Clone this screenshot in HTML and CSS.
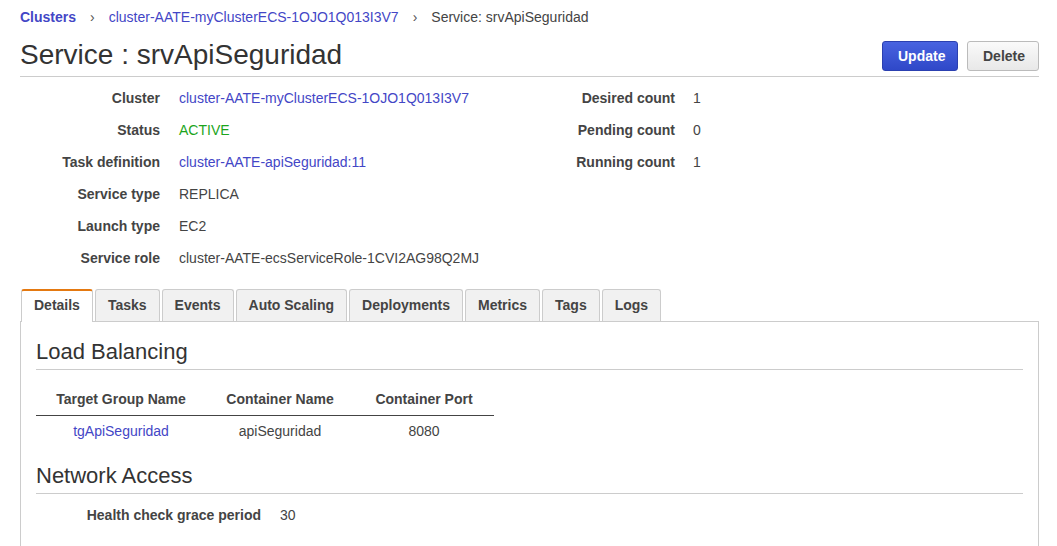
FILE: index.html
```html
<!DOCTYPE html>
<html>
<head>
<meta charset="utf-8">
<link rel="stylesheet" href="styles.css">
</head>
<body>
<div class="page">
  <nav class="crumbs">
    <a class="crumb-root" href="#">Clusters</a>
    <span class="sep">›</span>
    <a href="#">cluster-AATE-myClusterECS-1OJO1Q013I3V7</a>
    <span class="sep">›</span>
    <span class="current">Service: srvApiSeguridad</span>
  </nav>

  <header class="title-row">
    <h1 class="title">Service : srvApiSeguridad</h1>
    <div class="actions">
      <button class="btn btn-primary">Update</button>
      <button class="btn btn-default">Delete</button>
    </div>
  </header>

  <section class="summary">
    <dl class="kv kv-left">
      <dt>Cluster</dt><dd><a href="#">cluster-AATE-myClusterECS-1OJO1Q013I3V7</a></dd>
      <dt>Status</dt><dd class="active">ACTIVE</dd>
      <dt>Task definition</dt><dd><a href="#">cluster-AATE-apiSeguridad:11</a></dd>
      <dt>Service type</dt><dd>REPLICA</dd>
      <dt>Launch type</dt><dd>EC2</dd>
      <dt>Service role</dt><dd>cluster-AATE-ecsServiceRole-1CVI2AG98Q2MJ</dd>
    </dl>
    <dl class="kv kv-right">
      <dt>Desired count</dt><dd>1</dd>
      <dt>Pending count</dt><dd>0</dd>
      <dt>Running count</dt><dd>1</dd>
    </dl>
  </section>

  <ul class="tabs">
    <li class="tab tab-active">Details</li>
    <li class="tab">Tasks</li>
    <li class="tab">Events</li>
    <li class="tab">Auto Scaling</li>
    <li class="tab">Deployments</li>
    <li class="tab">Metrics</li>
    <li class="tab">Tags</li>
    <li class="tab">Logs</li>
  </ul>

  <div class="panel">
    <h2 class="section-title">Load Balancing</h2>
    <table class="lb-table">
      <thead>
        <tr><th class="c1">Target Group Name</th><th class="c2">Container Name</th><th class="c3">Container Port</th></tr>
      </thead>
      <tbody>
        <tr><td><a href="#">tgApiSeguridad</a></td><td>apiSeguridad</td><td>8080</td></tr>
      </tbody>
    </table>

    <h2 class="section-title section-gap">Network Access</h2>
    <dl class="kv kv-net">
      <dt>Health check grace period</dt><dd>30</dd>
    </dl>
  </div>
</div>
</body>
</html>
```

FILE: styles.css
```css
* { box-sizing: border-box; }

html, body {
  margin: 0;
  padding: 0;
  background: #fff;
}

body {
  font-family: "Liberation Sans", Arial, sans-serif;
  font-size: 14px;
  color: #444;
}

a {
  color: #4346c6;
  text-decoration: none;
}

.page {
  padding: 7px 18px 0 20px;
}

/* breadcrumbs */
.crumbs {
  display: flex;
  align-items: center;
  line-height: 20px;
  height: 20px;
}
.crumb-root { font-weight: bold; }
.sep {
  color: #555;
  margin: 0 14px;
  font-size: 14px;
}
.current { color: #444; }

/* title row */
.title-row {
  display: flex;
  justify-content: space-between;
  align-items: flex-end;
  margin-top: 11px;
  padding-bottom: 4px;
  border-bottom: 1px solid #ccc;
}
.title {
  margin: 0;
  font-size: 28px;
  font-weight: normal;
  line-height: 34px;
  color: #333;
}
.actions {
  display: flex;
  gap: 9px;
  margin-bottom: 1px;
}
.btn {
  font-family: "Liberation Sans", Arial, sans-serif;
  font-size: 14px;
  font-weight: bold;
  height: 30px;
  border-radius: 3px;
  padding: 0 15px;
  cursor: pointer;
}
.btn-primary {
  width: 76px;
  color: #fff;
  background: linear-gradient(#4863e0, #2f48c8);
  border: 1px solid #2b40b0;
}
.btn-default {
  width: 72px;
  color: #444;
  background: linear-gradient(#fafafa, #e8e8e8);
  border: 1px solid #bbb;
}

/* summary key/values */
.summary {
  display: flex;
  margin-top: 5px;
}
.kv {
  display: grid;
  margin: 0;
  column-gap: 19px;
  align-content: start;
}
.kv dt {
  font-weight: bold;
  text-align: right;
  line-height: 32px;
  color: #444;
}
.kv dd {
  margin: 0;
  line-height: 32px;
  color: #444;
}
.kv-left {
  grid-template-columns: 140px 351px;
}
.kv-right {
  grid-template-columns: 145px auto;
  column-gap: 18px;
}
.kv dd.active { color: #1ca51c; }

/* tabs */
.tabs {
  list-style: none;
  margin: 15px 0 0 0;
  padding: 0 0 0 1px;
  display: flex;
  gap: 2px;
  position: relative;
  z-index: 1;
}
.tab {
  height: 32px;
  line-height: 30px;
  padding: 0 12px;
  font-weight: bold;
  color: #444;
  background: #f1f1f1;
  border: 1px solid #ccc;
  border-bottom: none;
  border-radius: 3px 3px 0 0;
}
.tab-active {
  background: #fff;
  border-top: 2px solid #e47911;
  height: 33px;
  line-height: 28px;
  margin-bottom: -1px;
}

/* panel */
.panel {
  border: 1px solid #ccc;
  padding: 16px 15px 40px 15px;
  min-height: 240px;
}
.section-title {
  margin: 0;
  font-size: 22px;
  font-weight: normal;
  line-height: 28px;
  color: #333;
  padding-bottom: 3px;
  border-bottom: 1px solid #ccc;
}
.section-gap { margin-top: 16px; }

.lb-table {
  border-collapse: collapse;
  margin-top: 13px;
}
.lb-table th {
  height: 32px;
  font-weight: bold;
  text-align: center;
  color: #444;
  border-bottom: 1px solid #444;
  padding: 0;
}
.lb-table td {
  height: 31px;
  text-align: center;
  padding: 0;
  color: #444;
}
.c1 { width: 170px; }
.c2 { width: 148px; }
.c3 { width: 140px; }

.kv-net {
  grid-template-columns: 225px auto;
  margin-top: 6px;
}
.kv-net dt, .kv-net dd { line-height: 30px; }
```
